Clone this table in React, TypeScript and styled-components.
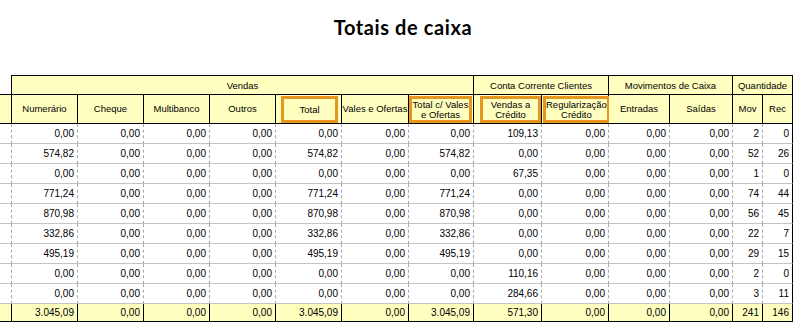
import React from 'react';
import styled, { createGlobalStyle } from 'styled-components';

const GlobalStyle = createGlobalStyle`
  body {
    margin: 0;
    background: #ffffff;
    font-family: 'Liberation Sans', Arial, sans-serif;
    color: #000000;
  }
`;

const columns = [12, 66, 66, 66, 66, 66, 67, 65, 68, 67, 61, 63, 30, 30];

const groups = [
  { label: 'Vendas', span: 7 },
  { label: 'Conta Corrente Clientes', span: 2 },
  { label: 'Movimentos de Caixa', span: 2 },
  { label: 'Quantidade', span: 2 },
];

interface HeadType {
  label: string;
  mark?: string;
}

const heads: HeadType[] = [
  { label: 'Numerário' },
  { label: 'Cheque' },
  { label: 'Multibanco' },
  { label: 'Outros' },
  { label: 'Total', mark: '1px 3px 0 5px' },
  { label: 'Vales e Ofertas' },
  { label: 'Total c/ Vales e Ofertas', mark: '1px 1px 0 0' },
  { label: 'Vendas a Crédito', mark: '1px 0 0 6px' },
  { label: 'Regularização Crédito', mark: '1px 1px 0 1px' },
  { label: 'Entradas' },
  { label: 'Saídas' },
  { label: 'Mov' },
  { label: 'Rec' },
];

const rows = [
  ['0,00', '0,00', '0,00', '0,00', '0,00', '0,00', '0,00', '109,13', '0,00', '0,00', '0,00', '2', '0'],
  ['574,82', '0,00', '0,00', '0,00', '574,82', '0,00', '574,82', '0,00', '0,00', '0,00', '0,00', '52', '26'],
  ['0,00', '0,00', '0,00', '0,00', '0,00', '0,00', '0,00', '67,35', '0,00', '0,00', '0,00', '1', '0'],
  ['771,24', '0,00', '0,00', '0,00', '771,24', '0,00', '771,24', '0,00', '0,00', '0,00', '0,00', '74', '44'],
  ['870,98', '0,00', '0,00', '0,00', '870,98', '0,00', '870,98', '0,00', '0,00', '0,00', '0,00', '56', '45'],
  ['332,86', '0,00', '0,00', '0,00', '332,86', '0,00', '332,86', '0,00', '0,00', '0,00', '0,00', '22', '7'],
  ['495,19', '0,00', '0,00', '0,00', '495,19', '0,00', '495,19', '0,00', '0,00', '0,00', '0,00', '29', '15'],
  ['0,00', '0,00', '0,00', '0,00', '0,00', '0,00', '0,00', '110,16', '0,00', '0,00', '0,00', '2', '0'],
  ['0,00', '0,00', '0,00', '0,00', '0,00', '0,00', '0,00', '284,66', '0,00', '0,00', '0,00', '3', '11'],
];

const totals = ['3.045,09', '0,00', '0,00', '0,00', '3.045,09', '0,00', '3.045,09', '571,30', '0,00', '0,00', '0,00', '241', '146'];

export default function App() {
  return (
    <Page>
      <GlobalStyle />
      <Title>Totais de caixa</Title>
      <Grid>
        <Corner />
        {groups.map((g) => (
          <GroupCell key={g.label} $span={g.span}>
            {g.label}
          </GroupCell>
        ))}

        <HeadCell />
        {heads.map((h) => (
          <HeadCell key={h.label}>
            {h.mark ? (
              <Mark $inset={h.mark}>{h.label}</Mark>
            ) : (
              <HeadText>{h.label}</HeadText>
            )}
          </HeadCell>
        ))}

        {rows.map((row, r) => (
          <React.Fragment key={r}>
            <DataCell />
            {row.map((v, c) => (
              <DataCell key={c} $last={c === row.length - 1}>
                {v}
              </DataCell>
            ))}
          </React.Fragment>
        ))}

        <TotalCell />
        {totals.map((v, c) => (
          <TotalCell key={c}>{v}</TotalCell>
        ))}
      </Grid>
    </Page>
  );
}

const Page = styled.div`
  width: 806px;
  height: 329px;
  overflow: hidden;
  background: #ffffff;
`;

const Title = styled.h1`
  margin: 0;
  height: 75px;
  padding-top: 15px;
  box-sizing: border-box;
  text-align: center;
  font-family: Lato, 'Liberation Sans', sans-serif;
  font-size: 20px;
  font-weight: 700;
  letter-spacing: 0.6px;
  line-height: 24px;
`;

const Grid = styled.div`
  display: grid;
  grid-template-columns: ${columns.map((w) => `${w}px`).join(' ')};
  width: ${columns.reduce((a, b) => a + b, 0)}px;
`;

const Corner = styled.div`
  height: 20px;
  box-sizing: border-box;
  border-right: 1px solid #000;
  border-bottom: 1px solid #000;
`;

const GroupCell = styled.div<{ $span: number }>`
  grid-column: span ${(p) => p.$span};
  height: 20px;
  box-sizing: border-box;
  display: flex;
  align-items: center;
  justify-content: center;
  background: #ffffc0;
  border-top: 1px solid #000;
  border-right: 1px solid #000;
  border-bottom: 1px solid #000;
  font-size: 9.5px;
`;

const HeadCell = styled.div`
  height: 29px;
  box-sizing: border-box;
  display: flex;
  background: #ffffc0;
  border-right: 1px solid #000;
  border-bottom: 1px solid #000;
  font-size: 9.5px;
  line-height: 10px;
`;

const HeadText = styled.span`
  flex: 1;
  display: flex;
  align-items: center;
  justify-content: center;
  text-align: center;
`;

const Mark = styled(HeadText)<{ $inset: string }>`
  margin: ${(p) => p.$inset};
  border: 3px solid #e8951d;
`;

const DataCell = styled.div<{ $last?: boolean }>`
  height: 20px;
  box-sizing: border-box;
  padding-right: 3px;
  text-align: right;
  font-size: 10px;
  line-height: 19px;
  border-bottom: 1px solid #c4c4c4;
  border-right: ${(p) => (p.$last ? '1px solid #000' : '1px dashed #a8a8a8')};
`;

const TotalCell = styled.div`
  height: 18px;
  box-sizing: border-box;
  padding-right: 3px;
  text-align: right;
  font-size: 10px;
  line-height: 17px;
  background: #ffffc0;
  border-right: 1px solid #000;
  border-bottom: 1px solid #000;
`;
